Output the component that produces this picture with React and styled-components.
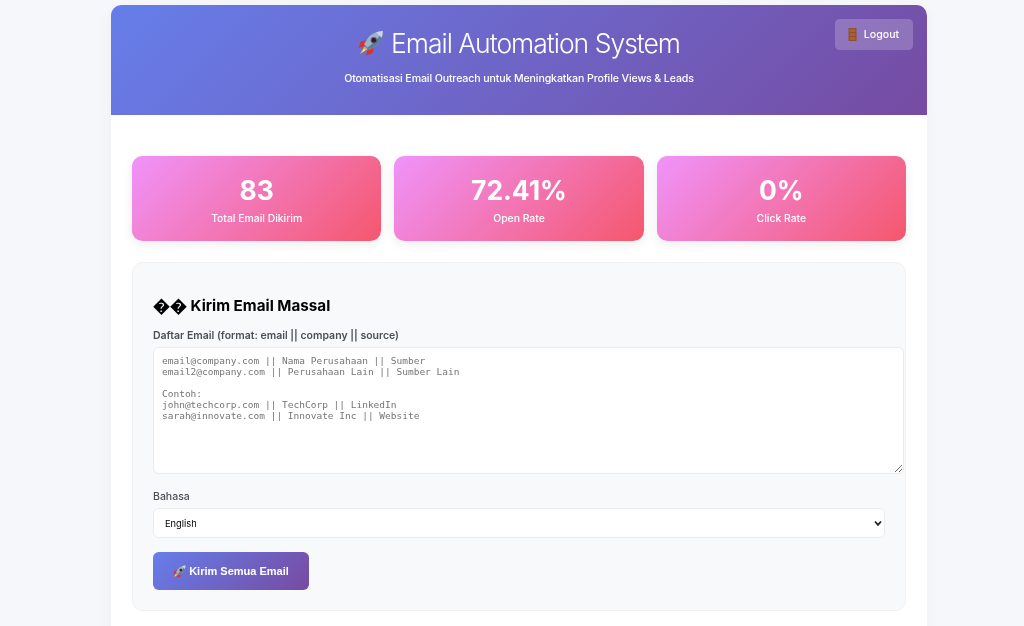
import React from "react";
import styled, { createGlobalStyle } from "styled-components";

const Global = createGlobalStyle`
  html, body { margin: 0; padding: 0; height: 626px; overflow: hidden; background: #f5f7fa; }
  * { box-sizing: border-box; }
  body { font-family: Inter, "Liberation Sans", sans-serif; color: #333; -webkit-font-smoothing: antialiased; }
`;

const Page = styled.div`
  padding: 5px 97px 0 111px;
  will-change: transform;
`;

const Container = styled.main`
  background: #fff;
  border-radius: 10.6px;
  box-shadow: 0 5px 16px rgba(0, 0, 0, 0.04);
  overflow: hidden;
  min-height: 640px;
`;

const Header = styled.header`
  position: relative;
  height: 110px;
  padding-top: 21px;
  background: linear-gradient(135deg, #667eea 0%, #764ba2 100%);
  color: #fff;
  text-align: center;
`;

const Title = styled.h1`
  display: flex;
  justify-content: center;
  align-items: center;
  gap: 7px;
  margin: 0;
  height: 34px;
  font-size: 26.5px;
  font-weight: 300;
  letter-spacing: -1px;
  line-height: 34px;
`;

const Subtitle = styled.p`
  margin: 12px 0 0;
  font-size: 10.6px;
  font-weight: 450;
  letter-spacing: -0.12px;
  line-height: 14px;
`;

const Logout = styled.button`
  position: absolute;
  top: 14px;
  right: 14px;
  width: 78px;
  height: 31px;
  display: flex;
  align-items: center;
  justify-content: center;
  gap: 7px;
  padding-left: 5px;
  border: 0;
  border-radius: 4.5px;
  background: rgba(255, 255, 255, 0.2);
  color: #fff;
  font: 450 10.6px Inter, sans-serif;
`;

const Content = styled.div`
  padding: 41px 21px 21px;
`;

const Stats = styled.section`
  display: grid;
  grid-template-columns: repeat(3, 1fr);
  gap: 13px;
  margin-bottom: 21px;
`;

const StatCard = styled.div`
  height: 85px;
  padding-top: 17px;
  border-radius: 10.6px;
  background: linear-gradient(135deg, #f093fb 0%, #f5576c 100%);
  box-shadow: 0 3px 11px rgba(0, 0, 0, 0.08);
  color: #fff;
  text-align: center;
`;

const StatValue = styled.div`
  font-size: 26.4px;
  font-weight: 700;
  line-height: 34px;
`;

const StatLabel = styled.div`
  margin-top: 5px;
  font-size: 10.4px;
  font-weight: 450;
  line-height: 13px;
`;

const Panel = styled.section`
  height: 349px;
  padding: 33px 20px 0;
  background: #f8f9fa;
  border: 1px solid #eff1f3;
  border-radius: 10.6px;
`;

const PanelTitle = styled.h2`
  margin: 0 0 13px;
  height: 20px;
  font-size: 15.2px;
  font-weight: 700;
  line-height: 20px;
  color: #000;
`;

const Unknown = styled.span`
  font-size: 17px;
  line-height: 20px;
  vertical-align: -1px;
`;

const Field = styled.div`
  margin-bottom: ${(p) => p.$gap}px;
`;

const Label = styled.label`
  display: block;
  margin-bottom: 5px;
  font-size: 10.5px;
  font-weight: ${(p) => p.$weight};
  line-height: 13px;
  color: #495057;
`;

const TextArea = styled.textarea`
  display: block;
  width: 751px;
  height: 127px;
  padding: 8px 8px;
  background: #fff;
  border: 1.4px solid #e9ecef;
  border-radius: 5.7px;
  font: 9.5px/10.9px "DejaVu Sans Mono", monospace;
  outline: none;
  &::placeholder { color: #757575; opacity: 1; }
`;

const SelectWrap = styled.div`
  position: relative;
  width: 732px;
`;

const Select = styled.select`
  display: block;
  width: 100%;
  height: 30px;
  padding: 0 11px;
  appearance: none;
  background: #fff;
  border: 1.4px solid #e9ecef;
  border-radius: 5.7px;
  color: #000;
  font: 400 9.3px Inter, sans-serif;
`;

const Chevron = styled.svg`
  position: absolute;
  top: 12px;
  right: 3px;
  width: 8px;
  height: 7px;
  pointer-events: none;
`;

const SendButton = styled.button`
  display: flex;
  align-items: center;
  justify-content: center;
  gap: 3px;
  width: 156px;
  height: 38px;
  padding-top: 1px;
  border: 0;
  border-radius: 5.7px;
  background: linear-gradient(135deg, #667eea 0%, #764ba2 100%);
  color: #fff;
  font: 700 11px "Liberation Sans", Arial, sans-serif;
`;

const Rocket = ({ size }) => (
  <svg width={size} height={size} viewBox="0 0 24 24" aria-hidden="true">
    <path d="M8 9.5 2.5 10.5 0.5 16.5l5.5-1.6z" fill="#d9342b" />
    <path d="M14.5 16 13.5 21.5 7.5 23.5l1.6-5.5z" fill="#d9342b" />
    <path d="M6.2 15.2 1.6 22.4 8.8 17.8z" fill="#f6b53a" />
    <path d="M5.2 17.6 3.6 20.4 6.4 18.8z" fill="#fdf0b0" />
    <path d="M23 1c-5.5.2-10.4 2.3-13.8 6.4L5.6 13.2l5.2 5.2 5.8-3.6C20.7 11.4 22.8 6.5 23 1z" fill="#9fb2c8" />
    <path d="M23 1c-.2 5.5-2.3 10.4-6.4 13.8l-5.8 3.6-2.3-2.3C13.5 13.5 19 7.5 23 1z" fill="#5f7b9c" />
    <path d="M23 1c-2.2.1-4.2.5-6.2 1.2l5 5c.7-2 1.1-4 1.2-6.2z" fill="#c9d6e3" />
    <circle cx="14.6" cy="9.4" r="2.9" fill="#4c5f78" />
    <circle cx="14.6" cy="9.4" r="2" fill="#3a1620" />
  </svg>
);

const Door = () => (
  <svg width="9" height="13" viewBox="0 0 9 13" aria-hidden="true">
    <rect x="0.5" y="0" width="8" height="13" fill="#8f4f2a" />
    <rect x="1.5" y="1" width="6" height="3" fill="#a8602f" />
    <rect x="1.5" y="5" width="6" height="3" fill="#a8602f" />
    <rect x="1.5" y="9" width="6" height="3" fill="#a8602f" />
  </svg>
);

const placeholder = `email@company.com || Nama Perusahaan || Sumber
email2@company.com || Perusahaan Lain || Sumber Lain

Contoh:
john@techcorp.com || TechCorp || LinkedIn
sarah@innovate.com || Innovate Inc || Website`;

const stats = [
  { value: "83", label: "Total Email Dikirim" },
  { value: "72.41%", label: "Open Rate" },
  { value: "0%", label: "Click Rate" },
];

export default function App() {
  return (
    <Page>
      <Global />
      <Container>
        <Header>
          <Title>
            <Rocket size={26} />
            <span>Email Automation System</span>
          </Title>
          <Subtitle>Otomatisasi Email Outreach untuk Meningkatkan Profile Views &amp; Leads</Subtitle>
          <Logout>
            <Door />
            <span>Logout</span>
          </Logout>
        </Header>
        <Content>
          <Stats>
            {stats.map((s) => (
              <StatCard key={s.label}>
                <StatValue>{s.value}</StatValue>
                <StatLabel>{s.label}</StatLabel>
              </StatCard>
            ))}
          </Stats>
          <Panel>
            <PanelTitle>
              <Unknown>��</Unknown> Kirim Email Massal
            </PanelTitle>
            <Field $gap={16}>
              <Label $weight={600}>Daftar Email (format: email || company || source)</Label>
              <TextArea placeholder={placeholder} />
            </Field>
            <Field $gap={14}>
              <Label $weight={500}>Bahasa</Label>
              <SelectWrap>
                <Select defaultValue="en">
                  <option value="en">English</option>
                  <option value="id">Indonesia</option>
                </Select>
                <Chevron viewBox="0 0 8 7" aria-hidden="true">
                  <path d="M1 1.5 4 4.8 7 1.5" fill="none" stroke="#222" strokeWidth="1.8" />
                </Chevron>
              </SelectWrap>
            </Field>
            <SendButton>
              <Rocket size={13} />
              <span>Kirim Semua Email</span>
            </SendButton>
          </Panel>
        </Content>
      </Container>
    </Page>
  );
}
